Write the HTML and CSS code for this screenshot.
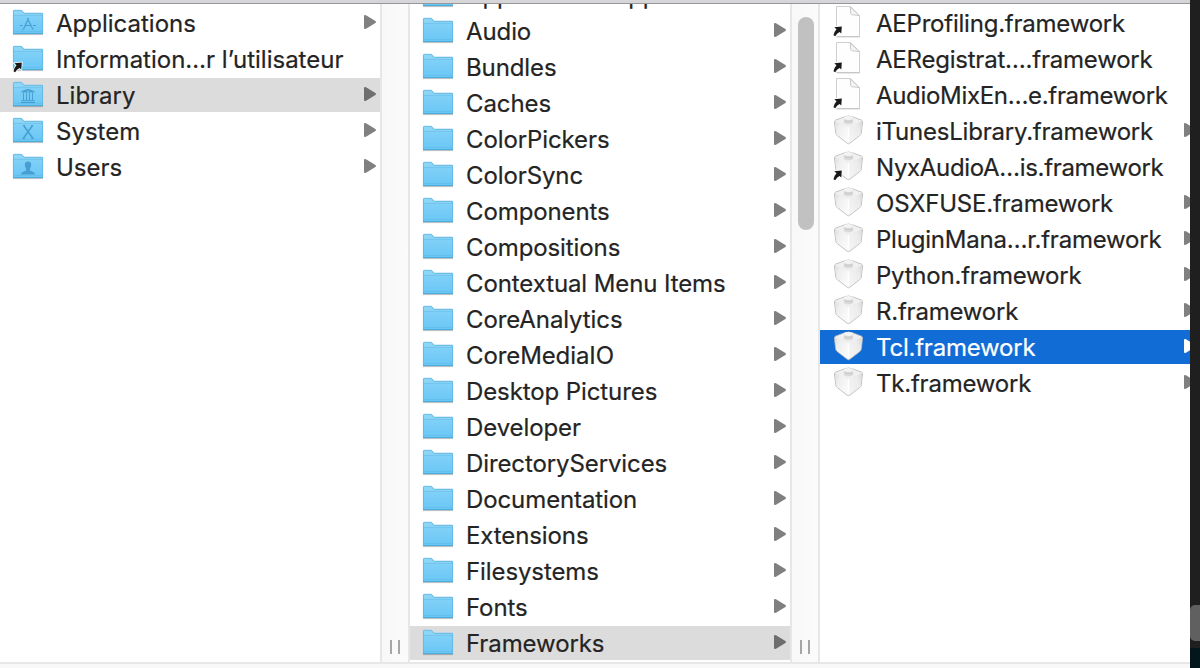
FILE: index.html
```html
<!DOCTYPE html>
<html lang="fr">
<head>
<meta charset="utf-8">
<title>Library</title>
<link rel="stylesheet" href="styles.css">
</head>
<body>
<svg class="defs" aria-hidden="true">
  <defs>
    <linearGradient id="front" x1="0" y1="0" x2="0" y2="1"><stop offset="0" stop-color="#82d1f8"/><stop offset="1" stop-color="#68c6f5"/></linearGradient>
    <linearGradient id="left" x1="0" y1="0" x2="1" y2=".6"><stop offset="0" stop-color="#dcdcdc"/><stop offset=".35" stop-color="#efefef"/><stop offset="1" stop-color="#fafafa"/></linearGradient>
    <linearGradient id="right" x1="1" y1="0" x2="0" y2=".6"><stop offset="0" stop-color="#d6d6d6"/><stop offset=".35" stop-color="#ebebeb"/><stop offset="1" stop-color="#f4f4f4"/></linearGradient>
    <symbol id="folder" viewBox="0 0 32 34">
      <path d="M1 28.6h30" stroke="#000" stroke-opacity=".25" stroke-width="1"/>
      <path d="M1 5.2Q1 4 2.200 4H9.200Q10 4 10.600 4.700L11.800 6.200Q12.200 6.800 13 6.800H30Q31 6.800 31 7.800V28H1Z" fill="#8fd5f6"/>
      <path d="M1 9H31V28H1Z" fill="url(#front)"/>
      <path d="M1.400 28V5.300Q1.400 4.300 2.400 4.300H9.200L11.400 6.900Q11.800 7.400 12.600 7.400H30.600V28" fill="none" stroke="#5fb5df" stroke-width=".8"/>
      <path d="M1.500 9.300H30.500M1.500 25.500H30.500" stroke="#62b9e4" stroke-width=".6"/>
      <path d="M1 27.600H31" stroke="#4ca9d6" stroke-width="1"/>
    </symbol>
    <symbol id="alias" viewBox="0 0 32 34">
      <path d="M2.300 21.300 9.800 20.500 9.300 27.600 7.600 26.100Q4.600 27.600 3.200 30.300L1.500 29.200Q1.900 26.200 4.500 23.300Z" fill="#191919" stroke="#fff" stroke-width="1.600" paint-order="stroke"/>
    </symbol>
    <symbol id="document" viewBox="0 0 32 34">
      <path d="M4.500 .5H18.500L27.500 9.500V30.500H4.500Z" fill="#fefefe" stroke="#cfcfcf" stroke-width="1" stroke-linejoin="round"/>
      <path d="M18.300 1 18.700 7.500Q19 8.800 20.500 8.800L27.300 9.600Z" fill="#f5f5f5" stroke="#c4c4c4" stroke-width=".9" stroke-linejoin="round"/>
      <path d="M5 31H28" stroke="#aaa" stroke-width=".5"/>
    </symbol>
    <symbol id="brick" viewBox="0 0 32 34">
      <path d="M3.500 6.200 12 3Q16.500 1 21 3L29.500 6.200Q30.700 6.800 30.500 8L29.300 18.800Q29.100 20.500 27.700 21.600L17.700 29.300Q16.500 30.200 15.300 29.300L5.300 21.600Q3.900 20.500 3.700 18.800L2.500 8Q2.300 6.800 3.500 6.200Z" fill="#ededed" stroke="#b9b9b9" stroke-width=".9" stroke-linejoin="round"/>
      <path d="M2.900 7.500 16.500 13.600V29.400L5.500 21.200Q4.300 20.200 4.100 18.800Z" fill="url(#left)"/>
      <path d="M30.100 7.500 16.500 13.600V29.400L27.500 21.200Q28.700 20.200 28.900 18.800Z" fill="url(#right)"/>
      <path d="M3.500 7 12 3.400H21L29.500 7 17.500 12.600Q16.500 13.100 15.500 12.600Z" fill="#f0f0f0"/>
      <path d="M16.500 13.500V27" stroke="#fff" stroke-width="1.400" stroke-linecap="round"/>
      <path d="M11.900 4.200V8.200C11.900 11 21.100 11 21.100 8.200V4.200" fill="#dadada"/>
      <ellipse cx="16.500" cy="4" rx="4.600" ry="1.900" fill="#f3f3f3"/>
      <path d="M12.500 6.900C14 7.700 19 7.700 20.500 6.900" fill="none" stroke="#c5c5c5" stroke-width=".9"/>
    </symbol>
    <symbol id="arrow" viewBox="0 0 12 14">
      <path d="M0 1Q0 0 1 .1L2 .3 11.400 6Q12.600 7 11.400 8L2 13.700 1 13.900Q0 14 0 13Z" fill="currentColor"/>
    </symbol>
    <symbol id="apps" viewBox="0 0 32 34">
      <g fill="none" stroke="#459fd2" stroke-width="1.200"><path d="M11.600 23 16.600 12.200M15.400 12.200 21 23.500M8 19.500H10.500M12.500 19.500H18.500M21 19.500H24M10.500 24.300 11.100 23.300"/></g>
    </symbol>
    <symbol id="library" viewBox="0 0 32 34">
      <path d="M9.500 14.500V13.200L16 10.800 22.500 13.200V14.500Z" fill="#459fd2"/><circle cx="16" cy="13.100" r=".8" fill="#7acdf5"/>
      <path d="M11.500 15V22.500M14.500 15V22.500M17.500 15V22.500M20.500 15V22.500M9.500 22.700H22.500M9 24.500H23" stroke="#459fd2" stroke-width="1"/>
    </symbol>
    <symbol id="system" viewBox="0 0 32 34">
      <path d="M11.800 11.700 20.800 24.300M20.400 11.700 11.400 24.300" stroke="#459fd2" stroke-width="1.500"/><path d="M10.800 11.500H13.200M19 11.500H21.200M10.500 24.500H13M19.200 24.500H21.700" stroke="#459fd2" stroke-width=".9"/>
    </symbol>
    <symbol id="users" viewBox="0 0 32 34">
      <path d="M16 11.500C18.500 11.500 19.400 13 19.100 15.200C18.900 17.400 18.200 18 17.900 18.700V20.200C18.400 21.300 23 21.500 23 24.500H9C9 21.500 13.600 21.300 14.100 20.200V18.700C13.800 18 13.100 17.400 12.900 15.200C12.600 13 13.500 11.500 16 11.500Z" fill="#459fd2"/>
    </symbol>
  </defs>
</svg>
<div class="screen">
  <main class="finder">
    <div class="toolbar-edge"></div>
    <div class="columns">
      <ul class="column">
        <li class="row"><svg class="icon"><use href="#folder"/><use href="#apps"/></svg><span class="name">Applications</span><svg class="arrow"><use href="#arrow"/></svg></li>
        <li class="row"><svg class="icon"><use href="#folder"/><use href="#alias"/></svg><span class="name">Information…r l’utilisateur</span></li>
        <li class="row current"><svg class="icon"><use href="#folder"/><use href="#library"/></svg><span class="name">Library</span><svg class="arrow"><use href="#arrow"/></svg></li>
        <li class="row"><svg class="icon"><use href="#folder"/><use href="#system"/></svg><span class="name">System</span><svg class="arrow"><use href="#arrow"/></svg></li>
        <li class="row"><svg class="icon"><use href="#folder"/><use href="#users"/></svg><span class="name">Users</span><svg class="arrow"><use href="#arrow"/></svg></li>
      </ul>
      <div class="gutter"><div class="grip"></div></div>
      <ul class="column scrolled">
        <li class="row"><svg class="icon"><use href="#folder"/></svg><span class="name">Application Support</span><svg class="arrow"><use href="#arrow"/></svg></li>
        <li class="row"><svg class="icon"><use href="#folder"/></svg><span class="name">Audio</span><svg class="arrow"><use href="#arrow"/></svg></li>
        <li class="row"><svg class="icon"><use href="#folder"/></svg><span class="name">Bundles</span><svg class="arrow"><use href="#arrow"/></svg></li>
        <li class="row"><svg class="icon"><use href="#folder"/></svg><span class="name">Caches</span><svg class="arrow"><use href="#arrow"/></svg></li>
        <li class="row"><svg class="icon"><use href="#folder"/></svg><span class="name">ColorPickers</span><svg class="arrow"><use href="#arrow"/></svg></li>
        <li class="row"><svg class="icon"><use href="#folder"/></svg><span class="name">ColorSync</span><svg class="arrow"><use href="#arrow"/></svg></li>
        <li class="row"><svg class="icon"><use href="#folder"/></svg><span class="name">Components</span><svg class="arrow"><use href="#arrow"/></svg></li>
        <li class="row"><svg class="icon"><use href="#folder"/></svg><span class="name">Compositions</span><svg class="arrow"><use href="#arrow"/></svg></li>
        <li class="row"><svg class="icon"><use href="#folder"/></svg><span class="name">Contextual Menu Items</span><svg class="arrow"><use href="#arrow"/></svg></li>
        <li class="row"><svg class="icon"><use href="#folder"/></svg><span class="name">CoreAnalytics</span><svg class="arrow"><use href="#arrow"/></svg></li>
        <li class="row"><svg class="icon"><use href="#folder"/></svg><span class="name">CoreMediaIO</span><svg class="arrow"><use href="#arrow"/></svg></li>
        <li class="row"><svg class="icon"><use href="#folder"/></svg><span class="name">Desktop Pictures</span><svg class="arrow"><use href="#arrow"/></svg></li>
        <li class="row"><svg class="icon"><use href="#folder"/></svg><span class="name">Developer</span><svg class="arrow"><use href="#arrow"/></svg></li>
        <li class="row"><svg class="icon"><use href="#folder"/></svg><span class="name">DirectoryServices</span><svg class="arrow"><use href="#arrow"/></svg></li>
        <li class="row"><svg class="icon"><use href="#folder"/></svg><span class="name">Documentation</span><svg class="arrow"><use href="#arrow"/></svg></li>
        <li class="row"><svg class="icon"><use href="#folder"/></svg><span class="name">Extensions</span><svg class="arrow"><use href="#arrow"/></svg></li>
        <li class="row"><svg class="icon"><use href="#folder"/></svg><span class="name">Filesystems</span><svg class="arrow"><use href="#arrow"/></svg></li>
        <li class="row"><svg class="icon"><use href="#folder"/></svg><span class="name">Fonts</span><svg class="arrow"><use href="#arrow"/></svg></li>
        <li class="row current"><svg class="icon"><use href="#folder"/></svg><span class="name">Frameworks</span><svg class="arrow"><use href="#arrow"/></svg></li>
      </ul>
      <div class="gutter"><div class="thumb"></div><div class="grip"></div></div>
      <ul class="column last">
        <li class="row"><svg class="icon"><use href="#document"/><use href="#alias"/></svg><span class="name">AEProfiling.framework</span></li>
        <li class="row"><svg class="icon"><use href="#document"/><use href="#alias"/></svg><span class="name">AERegistrat….framework</span></li>
        <li class="row"><svg class="icon"><use href="#document"/><use href="#alias"/></svg><span class="name tight">AudioMixEn…e.framework</span></li>
        <li class="row"><svg class="icon"><use href="#brick"/></svg><span class="name">iTunesLibrary.framework</span><svg class="arrow"><use href="#arrow"/></svg></li>
        <li class="row"><svg class="icon"><use href="#brick"/><use href="#alias"/></svg><span class="name tight">NyxAudioA…is.framework</span></li>
        <li class="row"><svg class="icon"><use href="#brick"/></svg><span class="name">OSXFUSE.framework</span><svg class="arrow"><use href="#arrow"/></svg></li>
        <li class="row"><svg class="icon"><use href="#brick"/></svg><span class="name">PluginMana…r.framework</span><svg class="arrow"><use href="#arrow"/></svg></li>
        <li class="row"><svg class="icon"><use href="#brick"/></svg><span class="name">Python.framework</span><svg class="arrow"><use href="#arrow"/></svg></li>
        <li class="row"><svg class="icon"><use href="#brick"/></svg><span class="name">R.framework</span><svg class="arrow"><use href="#arrow"/></svg></li>
        <li class="row selected"><svg class="icon"><use href="#brick"/></svg><span class="name">Tcl.framework</span><svg class="arrow"><use href="#arrow"/></svg></li>
        <li class="row"><svg class="icon"><use href="#brick"/></svg><span class="name">Tk.framework</span><svg class="arrow"><use href="#arrow"/></svg></li>
      </ul>
    </div>
    <div class="pathbar"></div>
  </main>
  <aside class="behind"><div class="behind-thumb"></div><div class="behind-foot"></div></aside>
</div>
</body>
</html>
```
FILE: styles.css
```css
* { box-sizing: border-box; }
body { margin: 0; overflow: hidden; background: #fff; color: #242424; font-family: Inter, "Liberation Sans", sans-serif; font-size: 24px; -webkit-text-stroke: .2px currentColor; }
.defs { display: block; width: 0; height: 0; }
.screen { display: flex; width: 1200px; height: 668px; overflow: hidden; }
.finder { display: flex; flex-direction: column; width: 1190px; background: #fff; }
.toolbar-edge { height: 4px; flex: none; background: #d6d5d8; border-bottom: 1px solid #97969a; }
.columns { display: flex; height: 658px; flex: none; overflow: hidden; }
.column { list-style: none; margin: 0; padding: 2px 0 0; width: 380px; flex: none; overflow: hidden; }
.column.last { width: 370px; }
.scrolled .row:first-child { margin-top: -28px; }
.row { display: flex; height: 34px; margin-bottom: 2px; padding-left: 12px; padding-right: 4px; width: 380px; }
.current { background: #dcdcdc; }
.selected { background: #116cd6; color: #fff; }
.icon { width: 32px; height: 34px; flex: none; margin-right: 12px; }
.name { flex: 1; line-height: 35px; white-space: nowrap; }
.scrolled .name { letter-spacing: -.1px; }
.last .name { letter-spacing: -.22px; }
.last .tight { letter-spacing: -.32px; }
.arrow { width: 12px; height: 14px; margin-top: 9px; flex: none; color: #808080; }
.current .arrow { color: #6e6e6e; }
.selected .arrow { color: #fff; }
.gutter { display: flex; flex-direction: column; align-items: center; width: 30px; flex: none; padding: 13px 0 8px; background: linear-gradient(90deg, #f8f8f8, #fbfbfb); border: solid #e7e7e7; border-width: 0 2px; }
.thumb { width: 16px; height: 213px; border-radius: 8px; background: #c1c1c1; margin-left: 2px; }
.grip { width: 10px; height: 14px; margin-top: auto; border: solid #a6a6a6; border-width: 0 2px; }
.pathbar { flex: 1; background: #f8f8f8; border-top: 2px solid #e7e7e7; }
.behind { display: flex; flex-direction: column; width: 10px; padding-top: 605px; background: #1f1f1f; }
.behind-thumb { height: 36px; background: #606060; border-radius: 5px 0 0 5px; }
.behind-foot { height: 20px; margin-top: auto; background: #03161c; }
```
